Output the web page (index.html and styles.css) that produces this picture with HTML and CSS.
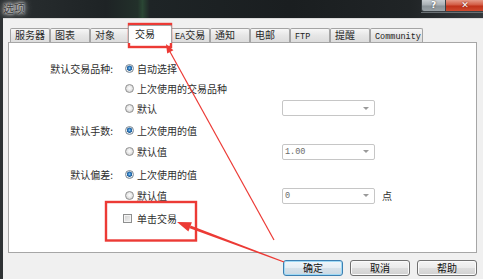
FILE: index.html
```html
<!DOCTYPE html>
<html lang="zh">
<head>
<meta charset="utf-8">
<title>选项</title>
<link rel="stylesheet" href="styles.css">
</head>
<body>
<div class="window">
  <div class="titlebar">
    <span class="title">选项</span>
    <div class="caption">
      <div class="cbtn help">?</div>
      <div class="cbtn close">✕</div>
    </div>
  </div>
  <div class="client">
    <div class="tabs">
      <div class="tab">服务器</div>
      <div class="tab">图表</div>
      <div class="tab">对象</div>
      <div class="tab sel">交易</div>
      <div class="tab"><span class="lat">EA</span>交易</div>
      <div class="tab">通知</div>
      <div class="tab">电邮</div>
      <div class="tab"><span class="lat">FTP</span></div>
      <div class="tab">提醒</div>
      <div class="tab wide"><span class="lat">Community</span></div>
    </div>
    <div class="panel">
      <div class="group g1">
        <div class="row">
          <div class="label">默认交易品种:</div>
          <div class="opt"><span class="radio on"></span>自动选择</div>
        </div>
        <div class="row">
          <div class="label"></div>
          <div class="opt"><span class="radio"></span>上次使用的交易品种</div>
        </div>
        <div class="row">
          <div class="label"></div>
          <div class="opt"><span class="radio"></span>默认</div>
          <div class="combo"><span class="val"></span><span class="arrow"></span></div>
        </div>
      </div>
      <div class="group g2">
        <div class="row">
          <div class="label">默认手数:</div>
          <div class="opt"><span class="radio on"></span>上次使用的值</div>
        </div>
        <div class="row">
          <div class="label"></div>
          <div class="opt"><span class="radio"></span>默认值</div>
          <div class="combo"><span class="val">1.00</span><span class="arrow"></span></div>
        </div>
      </div>
      <div class="group g3">
        <div class="row">
          <div class="label">默认偏差:</div>
          <div class="opt"><span class="radio on"></span>上次使用的值</div>
        </div>
        <div class="row">
          <div class="label"></div>
          <div class="opt"><span class="radio"></span>默认值</div>
          <div class="combo"><span class="val">0</span><span class="arrow"></span></div>
          <div class="unit">点</div>
        </div>
      </div>
      <div class="group g4">
        <div class="row">
          <div class="label"></div>
          <div class="opt chk"><span class="check"></span>单击交易</div>
        </div>
      </div>
    </div>
    <div class="buttons">
      <div class="btn default">确定</div>
      <div class="btn">取消</div>
      <div class="btn">帮助</div>
    </div>
  </div>
  <svg class="annot" width="483" height="279" viewBox="0 0 483 279">
    <rect x="129" y="24" width="42" height="23" fill="none" stroke="#ec3a35" stroke-width="2.4"/>
    <line x1="274" y1="240" x2="169" y2="50" stroke="#ec3a35" stroke-width="1.2"/>
    <polygon points="166,44 173.4,50.2 167.2,53.6" fill="#ec3a35"/>
    <rect x="106" y="202" width="90" height="38.5" fill="none" stroke="#ec3a35" stroke-width="2.4"/>
    <polygon points="190.6,225.5 284.2,261.4 283.8,262.6 189.6,228.3" fill="#ec3a35"/>
    <polygon points="177,222 191.9,222.2 188.4,231.6" fill="#ec3a35"/>
  </svg>
</div>
</body>
</html>
```
FILE: styles.css
```css
* { box-sizing: border-box; }

body {
  margin: 0;
  background: #f0f0f0;
  font-family: "Noto Sans CJK SC", "Noto Sans", sans-serif;
}

.window {
  position: relative;
  width: 483px;
  height: 279px;
  overflow: hidden;
  display: flex;
  flex-direction: column;
  background: #2e3234;
}

.titlebar {
  height: 18px;
  flex: none;
  display: flex;
  justify-content: space-between;
  align-items: flex-start;
  background: linear-gradient(90deg, #2a2f31 0%, #1e2325 22%, #22302a 28.5%, #2a4634 29.5%, #1e2426 31%, #1a1e20 60%, #202426 85%, #35393c 100%);
}

.title {
  margin: 2px 0 0 3px;
  font-size: 11px;
  line-height: 13px;
  color: #3a3a3a;
  text-shadow: 0 0 2px #f0f0f0, 0 0 4px #d8d8d8, 0 0 7px #b0b0b0, 0 0 10px #888;
}

.caption {
  display: flex;
  margin-right: -2px;
  border-bottom: 1px solid #6a7074;
}

.cbtn {
  height: 12px;
  font-family: "DejaVu Sans", sans-serif;
  font-weight: bold;
  font-size: 9px;
  line-height: 11px;
  text-align: center;
  color: #fff;
  border: 1px solid #3a4044;
  border-top: none;
}

.help {
  width: 25px;
  border-radius: 0 0 0 3px;
  background: linear-gradient(#c9ced2, #a8afb4 45%, #8b9398 55%, #9aa2a7);
  text-shadow: 0 0 2px #333;
}

.close {
  width: 39px;
  border-left: none;
  background: linear-gradient(#e59a88, #d25a42 45%, #bf3119 55%, #cf4a2e);
  text-shadow: 0 0 2px #5a1000;
}

.client {
  flex: 1;
  margin-left: 3px;
  background: #f0f0f0;
  border-top: 1px solid #dadada;
  padding: 6px 6px 0 5px;
  display: flex;
  flex-direction: column;
}

.tabs {
  height: 17px;
  display: flex;
  align-items: flex-end;
  margin-left: 2px;
}

.tab {
  width: 40px;
  height: 14px;
  flex: none;
  border: 1px solid #a4a4a4;
  border-bottom: none;
  border-radius: 2px 2px 0 0;
  background: linear-gradient(#f6f6f6, #e6e6e6 50%, #dcdcdc);
  font-size: 10px;
  line-height: 12px;
  padding: 0 0 0 4px;
  color: #2a2a2a;
  white-space: nowrap;
}

.tab.sel {
  width: 44px;
  height: 18px;
  margin: 0 -2px -1px;
  padding: 2px 0 0 6px;
  background: #fff;
  position: relative;
  z-index: 1;
}

.tab.wide {
  width: 53px;
}

.lat {
  font-family: "Liberation Mono", monospace;
  font-size: 8.5px;
  color: #222;
}

.panel {
  height: 211px;
  flex: none;
  background: #fff;
  border: 1px solid #a6a6a6;
  padding-top: 15px;
}

.row {
  display: grid;
  grid-template-columns: 106px 167px 93px auto;
  align-items: center;
  height: 20px;
  font-size: 10px;
  color: #2e2e2e;
}

.g2, .g3 { margin-top: 2px; }
.g2 .row, .g3 .row { height: 21px; }
.g4 { margin-top: 2px; }

.label {
  text-align: right;
  padding-right: 2px;
  white-space: nowrap;
}

.opt {
  display: flex;
  align-items: center;
  gap: 3px;
  padding-left: 10px;
  white-space: nowrap;
}

.opt.chk {
  padding-left: 8px;
  gap: 5px;
}

.radio {
  width: 9px;
  height: 9px;
  flex: none;
  border-radius: 50%;
  border: 1px solid #929292;
  background: radial-gradient(circle at 50% 45%, #fdfdfd 0, #ececec 2px, #d2d2d2 4px);
}

.radio.on {
  border-color: #7d8a96;
  background: radial-gradient(circle at 50% 45%, #9fd3f7 0, #3b86c8 1.2px, #1d5e9c 2.4px, #eef2f5 2.9px, #d4d8dc 4px);
}

.check {
  width: 9px;
  height: 9px;
  flex: none;
  border: 1px solid #8e8f8f;
  background: linear-gradient(135deg, #cfcfcf, #f4f4f4);
  box-shadow: inset 0 0 0 1px #f4f4f4;
}

.combo {
  width: 93px;
  height: 16px;
  border: 1px solid #c6c6c6;
  border-radius: 2px;
  background: #fff;
  display: flex;
  align-items: center;
  justify-content: space-between;
  padding: 0 5px 0 2px;
}

.val {
  font-family: "Liberation Mono", monospace;
  font-size: 8.5px;
  color: #6a6a6a;
}

.arrow {
  width: 0;
  height: 0;
  border-left: 3px solid transparent;
  border-right: 3px solid transparent;
  border-top: 3px solid #9a9a9a;
}

.unit {
  margin-left: 7px;
}

.buttons {
  display: flex;
  justify-content: flex-end;
  gap: 7px;
  margin-top: 7px;
}

.btn {
  width: 60px;
  height: 16px;
  border: 1px solid #707070;
  border-radius: 3px;
  background: linear-gradient(#f4f4f4, #ebebeb 48%, #dddddd 52%, #d0d0d0);
  box-shadow: inset 0 0 0 1px #fbfbfb;
  font-size: 10px;
  line-height: 14px;
  text-align: center;
  color: #111;
}

.btn.default {
  border-color: #3c7fb1;
  box-shadow: inset 0 0 0 1px #9fd9f5;
  background: linear-gradient(#f0f6fa, #e6eef4 48%, #d6e2ea 52%, #cbd8e2);
}

.annot {
  position: absolute;
  top: 0;
  left: 0;
  pointer-events: none;
}
```
